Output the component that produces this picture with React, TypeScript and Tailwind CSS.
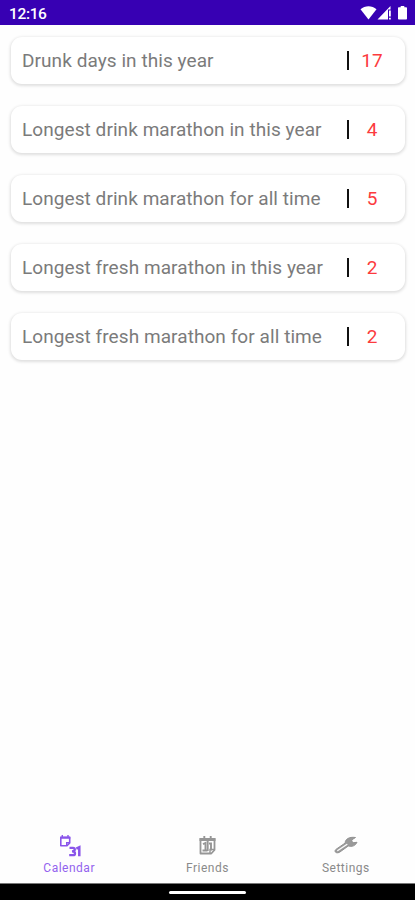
const stats = [
  { label: 'Drunk days in this year', value: 17 },
  { label: 'Longest drink marathon in this year', value: 4 },
  { label: 'Longest drink marathon for all time', value: 5 },
  { label: 'Longest fresh marathon in this year', value: 2 },
  { label: 'Longest fresh marathon for all time', value: 2 },
];

function StatusIcons() {
  return (
    <svg width="50" height="16" viewBox="0 0 50 16" fill="#fff">
      <path d="M0.500 4.200C5 .2 12 .2 16.500 4.200L8.500 14.500Z" />
      <path d="M17.500 14.500L30.500 1V4.500H28V14.500Z" />
      <path d="M29 5.500H30.800V11.500H29ZM29 12.700H30.800V14.500H29Z" />
      <path d="M40.700 1H44.300V2.300H46.200Q47 2.300 47 3.100V13.700Q47 14.500 46.200 14.500H38.800Q38 14.500 38 13.700V3.100Q38 2.300 38.800 2.300H40.700Z" />
    </svg>
  );
}

function CalendarIcon() {
  return (
    <svg width="24" height="24" viewBox="0 0 24 24" fill="none" stroke="#8a55ea">
      <path d="M3.800 3.500H12.700V9L10 11.800H3.800Z" strokeWidth="1.600" strokeLinejoin="round" />
      <path d="M3.200 3.600H13.300" strokeWidth="2.200" />
      <path d="M5.300 1V4M11 1V4M9.700 11.500V8.700H12.500" strokeWidth="1.400" />
      <path d="M12.500 13.900H16Q17.800 13.900 17.800 15.500Q17.800 17.200 15 17.400Q18 17.400 18 19.500Q18 21.200 16 21.200H12.200" strokeWidth="2.300" />
      <path d="M19.300 14.700L22.300 13.300V22.300" strokeWidth="2.500" />
    </svg>
  );
}

function FriendsIcon() {
  return (
    <svg width="24" height="24" viewBox="0 0 24 24" fill="none" stroke="#969696">
      <path d="M5.500 4.800H19.500V16L16.300 19.500H5.500Z" strokeWidth="1.800" strokeLinejoin="round" />
      <path d="M4.500 5.500H20.500" strokeWidth="3" />
      <path d="M9.300 2V6M15.700 2V6" strokeWidth="1.900" />
      <path d="M8 10.200L10.500 9V16.500M7.500 16.500H12.500" strokeWidth="1.900" />
      <path d="M12.700 5V17M16 8.500V16.500M14 9.500H16" strokeWidth="1.900" />
      <path d="M15 19V15.500H19" strokeWidth="1.400" />
    </svg>
  );
}

function WrenchIcon() {
  return (
    <svg width="26" height="24" viewBox="0 0 26 24" strokeLinejoin="round">
      <path
        d="M3.200 15.200L12.200 9C12 5.500 15.800 2.500 22.500 3.500L18.600 6L19.600 8.800L24 8.300C22.500 12 18.500 13 15.300 12L6.500 18.300C3 20 .5 17.200 3.200 15.200Z"
        fill="#9a9a9a"
        stroke="#929292"
        strokeWidth="1"
      />
      <path d="M4.800 16.500L13.800 10.500" fill="none" stroke="#fafafa" strokeWidth="1.500" strokeLinecap="round" />
    </svg>
  );
}

export default function App() {
  return (
    <div className="flex h-[900px] w-[415px] flex-col overflow-hidden bg-[#fefefe] font-[Roboto,sans-serif]">
      <header className="flex h-[25px] shrink-0 items-start justify-between bg-[#3700b3] pl-[9px] pr-[5px] text-white">
        <span className="pt-[4px] text-[15.500px] font-medium leading-[20px] tracking-[-0.35px]">12:16</span>
        <div className="pt-[5px]"><StatusIcons /></div>
      </header>

      <main className="flex flex-1 flex-col gap-[22px] pl-[11px] pr-[10px] pt-[12px]">
        {stats.map((s) => (
          <div key={s.label} className="flex h-[47px] shrink-0 items-center rounded-[11px] bg-white pl-[11px] shadow-[0_1px_3px_1px_rgba(0,0,0,0.12)]">
            <span className="w-[325px] whitespace-nowrap pt-px text-[19px] leading-[24px] tracking-[0.07px] text-[#7b7b7b]">{s.label}</span>
            <span className="h-[19px] w-[2px] bg-[#111]" />
            <span className="w-[46px] pt-px text-center text-[19px] leading-[24px] text-[#fc3b3e]">{s.value}</span>
          </div>
        ))}
      </main>

      <nav className="grid h-[60px] shrink-0 grid-cols-3 bg-[#fefefe] pt-[11px] text-[12px] leading-[16px] tracking-[0.5px]">
        <div className="flex flex-col items-center gap-[2px] text-[#9363ee]">
          <CalendarIcon />
          <span>Calendar</span>
        </div>
        <div className="flex flex-col items-center gap-[2px] text-[#8a8a8a]">
          <FriendsIcon />
          <span>Friends</span>
        </div>
        <div className="flex flex-col items-center gap-[2px] text-[#8a8a8a]">
          <WrenchIcon />
          <span>Settings</span>
        </div>
      </nav>
      <footer className="flex h-[17px] shrink-0 justify-center border-t border-[#777] bg-black pt-[7px]">
        <div className="h-[3px] w-[77px] rounded-full bg-white" />
      </footer>
    </div>
  );
}
